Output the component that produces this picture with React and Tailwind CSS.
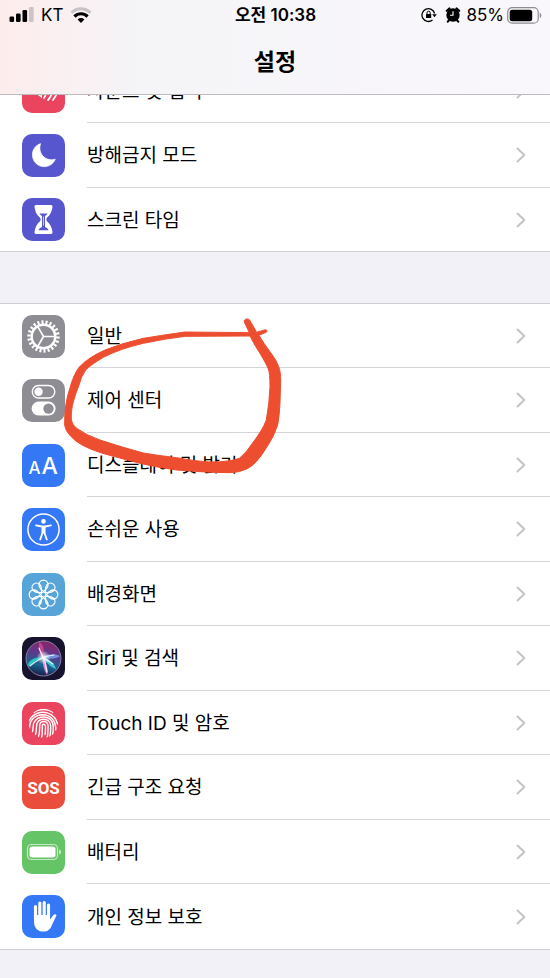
import React from "react";

const ROW_LABEL = "pt-0.5 text-[19px] leading-6 text-black";

function Tile({ className, children }) {
  return (
    <span className={`block h-[43px] w-[43px] shrink-0 overflow-hidden rounded-[10px] ${className}`}>
      <svg viewBox="0 0 43 43" className="block h-full w-full" fill="none" aria-hidden="true">
        {children}
      </svg>
    </span>
  );
}

function SoundIcon() {
  return (
    <Tile className="bg-[#eb445e]">
      <path d="M8 17h5l7-6v17l-7-5H8z" fill="#fff" />
      <path d="M23 16c2 3 2 8-1 12M28 13c3 5 3 12-2 17M33 11c3 6 3 13-2 19" stroke="#fff" strokeWidth="1.8" strokeLinecap="round" />
    </Tile>
  );
}

function MoonIcon() {
  return (
    <Tile className="bg-[#5856ce]">
      <path
        d="M18.6 9.6C13.4 11.4 10.4 15.8 10.4 20.8c0 6.7 5.2 11.9 11.9 11.9 5 0 9.1-2.8 11-7.6C24.8 28.2 15.2 20.5 18.6 9.6z"
        fill="#fff"
        stroke="#fff"
        strokeLinejoin="round"
        strokeWidth="0.6"
      />
    </Tile>
  );
}

function HourglassIcon() {
  return (
    <Tile className="bg-[#5856ce]">
      <path
        d="M14 7h15c1.300 0 1.700 1.200 1.400 2.400-.8 4.800-2.400 7.600-5 9.800-1.400 1.300-1.400 3.300 0 4.600 2.600 2.200 4.200 5 5 9.800.3 1.200-.1 2.400-1.400 2.400H14c-1.300 0-1.700-1.200-1.400-2.400.8-4.800 2.400-7.600 5-9.800 1.400-1.300 1.400-3.300 0-4.600-2.600-2.200-4.200-5-5-9.800C12.300 8.200 12.700 7 14 7z"
        fill="#fff"
      />
      <path d="M17.500 15.500h8c-.3 1.200-1.500 1.700-2.500 2.500v11c1.300.8 3 1.500 3.500 3.200h-10c.5-1.700 2.200-2.400 3.500-3.200V18c-1-.8-2.200-1.300-2.500-2.500z" fill="#5856ce" />
      <path d="M21.500 18.500v9" stroke="#fff" strokeWidth="0.700" />
    </Tile>
  );
}

function GearIcon() {
  return (
    <Tile className="bg-[#8e8d93]">
      <circle cx="21.500" cy="21.500" r="14.400" stroke="#fff" strokeWidth="3.600" pathLength="44" strokeDasharray="1 1" />
      <circle cx="21.500" cy="21.500" r="11.800" stroke="#fff" strokeWidth="2.400" />
      <path d="M21.500 21.500h11M21.500 21.500l-5.500-9.500M21.500 21.500l-5.500 9.500" stroke="#fff" strokeWidth="1.600" />
    </Tile>
  );
}

function ControlIcon() {
  return (
    <Tile className="bg-[#8e8d93]">
      <rect x="10.300" y="6.500" width="22.500" height="12.500" rx="6.250" stroke="#fff" strokeWidth="1.400" />
      <circle cx="16.600" cy="12.700" r="4.200" fill="#fff" />
      <rect x="9.600" y="22.600" width="24" height="14" rx="7" fill="#fff" />
      <circle cx="26.500" cy="29.600" r="5.200" fill="#8e8d93" />
    </Tile>
  );
}

function DisplayIcon() {
  return (
    <Tile className="bg-[#3478f6]">
      <text x="6.500" y="30" fill="#fff" fontFamily="Inter, sans-serif" fontSize="17" fontWeight="500">A</text>
      <text x="19.500" y="30" fill="#fff" fontFamily="Inter, sans-serif" fontSize="23" fontWeight="500">A</text>
    </Tile>
  );
}

function AccessibilityIcon() {
  return (
    <Tile className="bg-[#3478f6]">
      <circle cx="21.500" cy="21.500" r="15.600" stroke="#fff" strokeWidth="1.500" />
      <circle cx="21.500" cy="13.400" r="2.300" fill="#fff" />
      <path d="M14 17.300l5.800 1.200h3.400l5.800-1.200M20.600 19v5.500l-2.400 7M22.400 19v5.500l2.400 7" stroke="#fff" strokeWidth="1.800" strokeLinecap="round" strokeLinejoin="round" />
      <path d="M19.700 18h3.600v7.500h-3.600z" fill="#fff" />
    </Tile>
  );
}

function WallpaperIcon() {
  return (
    <Tile className="bg-[#57a5d8]">
      {[0, 45, 90, 135, 180, 225, 270, 315].map((angle) => (
        <path
          key={angle}
          d="M21.500 18.600C19 16.500 17 14 17 11.700a4.500 4.500 0 0 1 9 0c0 2.300-2 4.800-4.500 6.900z"
          stroke="#fff"
          strokeWidth="1.300"
          strokeLinejoin="round"
          transform={`rotate(${angle} 21.500 21.500)`}
        />
      ))}
      <circle cx="21.500" cy="21.500" r="2.300" stroke="#fff" strokeWidth="1" />
    </Tile>
  );
}

function SiriIcon() {
  return (
    <Tile className="bg-[#17132f]">
      <defs>
        <linearGradient id="siriOrb" x1="0.600" y1="0" x2="0.400" y2="1">
          <stop offset="0" stopColor="#8a2468" />
          <stop offset="0.400" stopColor="#5a3a8c" />
          <stop offset="0.700" stopColor="#176590" />
          <stop offset="1" stopColor="#1d1748" />
        </linearGradient>
        <radialGradient id="siriGlow">
          <stop offset="0" stopColor="#fff" />
          <stop offset="0.400" stopColor="#fff" stopOpacity="0.600" />
          <stop offset="1" stopColor="#fff" stopOpacity="0" />
        </radialGradient>
      </defs>
      <circle cx="21.500" cy="21.500" r="17.500" fill="url(#siriOrb)" stroke="#8b8aa8" strokeWidth="0.900" />
      <path d="M21 20C11 20 5 25 6 29c4-1 9-6 15-8z" fill="#2be0cf" opacity="0.800" />
      <path d="M21 20c2-8 0-13-4-15 0 6 0 11 4 15z" fill="#e0509a" opacity="0.700" />
      <path d="M21 20c4-3 12-4 17-1-4 3-11 4-17 1z" fill="#74a5f2" opacity="0.800" />
      <path d="M21 20c6 2 12 7 13 12-5-2-10-6-13-12z" fill="#48dfe8" opacity="0.800" />
      <path d="M21 20c3 6 6 13 4 18-3-5-5-12-4-18z" fill="#f08fd8" opacity="0.900" />
      <path d="M8 29c4-3 8-7 14-8l9 6M22 20l3 15M21 21l-4-10M21 20l11-2" stroke="#fff" strokeWidth="1.200" strokeLinecap="round" opacity="0.850" />
      <circle cx="21.500" cy="20.500" r="7" fill="url(#siriGlow)" />
    </Tile>
  );
}

function TouchIdIcon() {
  return (
    <Tile className="bg-[#eb445e]">
      <defs>
        <clipPath id="fingerClip">
          <ellipse cx="21.500" cy="21.200" rx="14.800" ry="14.500" />
        </clipPath>
      </defs>
      <g stroke="#fff" strokeWidth="1.400" strokeLinecap="round" clipPath="url(#fingerClip)">
        <path d="M12 10.500C17 6.500 26 6.500 31 10.500" />
        <path d="M7 19c2-4 5-6.500 9-8 6-2 13 0 16.500 4.500 1.500 2 2.500 4 3 6.500" />
        <path d="M7.500 26c0-7 4.500-13 13-13.300C29 12.700 34 19 33.800 28" />
        <path d="M10.500 29.500c1-3 0-6 1.500-9 2-4 5-5.500 9.500-5.500 6 0 9.800 4 9.800 10 0 3 0 5-.8 8" />
        <path d="M13.500 32.500c1.500-4 .5-8 1.500-11 1-3 3.500-4.300 6.500-4.300 4.500 0 7.200 3 7.200 7.500 0 4 0 7-1 10" />
        <path d="M16.500 34.500c1.500-4 1-8 1.200-11.500.3-2.300 1.800-3.500 3.800-3.500 3 0 4.600 2 4.600 5 0 4.500 0 8-1 11" />
        <path d="M19.500 36c1-4 .8-8 .8-12 0-2.500 3-2.500 3.200.5 0 3 .1 6-.5 8" />
      </g>
    </Tile>
  );
}

function SosIcon() {
  return (
    <Tile className="bg-[#eb4d3d]">
      <text x="21.500" y="27.500" textAnchor="middle" fill="#fff" fontFamily="Roboto, sans-serif" fontSize="17" fontWeight="700">SOS</text>
    </Tile>
  );
}

function BatteryIcon() {
  return (
    <Tile className="bg-[#65c466]">
      <rect x="5.500" y="13.500" width="30" height="15" rx="4" stroke="#c5eac5" strokeWidth="1.200" />
      <rect x="7.500" y="15.500" width="26" height="11" rx="2.500" fill="#fff" />
      <path d="M37.300 18.500c2.300.8 2.300 4.200 0 5z" fill="#d9f2d9" />
    </Tile>
  );
}

function HandIcon() {
  return (
    <Tile className="bg-[#3478f6]">
      <path d="M13.500 24V11.500M17.800 22V8M22.200 22V7.500M26.500 22V10" stroke="#fff" strokeWidth="3.100" strokeLinecap="round" />
      <path d="M12.050 20h15.900v4.500l3.300-4.300c1-1.200 2.800-1 3.300 0l-4.600 9.800C28.500 34.500 25.500 36.600 21.500 36.600c-6 0-9.450-4-9.450-9.600z" fill="#fff" />
    </Tile>
  );
}

function Chevron() {
  return (
    <svg viewBox="0 0 10 16" className="h-4 w-[10px] shrink-0" fill="none" aria-hidden="true">
      <path d="M1.500 1.500L8.300 8l-6.800 6.500" stroke="#c4c4c7" strokeWidth="2" strokeLinecap="round" strokeLinejoin="round" />
    </svg>
  );
}

function Row({ icon, label }) {
  return (
    <li className="group flex min-h-16 even:min-h-[65px] last:min-h-[63px]">
      <a href="#" className="flex grow items-center gap-[22px] pl-[22px]">
        {icon}
        <span className="flex grow items-center justify-between self-stretch border-b border-[#d5d5d8] pr-6 group-last:border-b-0">
          <span className={ROW_LABEL}>{label}</span>
          <Chevron />
        </span>
      </a>
    </li>
  );
}

const alerts = [
  { icon: <SoundIcon />, label: "사운드 및 햅틱" },
  { icon: <MoonIcon />, label: "방해금지 모드" },
  { icon: <HourglassIcon />, label: "스크린 타임" },
];

const general = [
  { icon: <GearIcon />, label: "일반" },
  { icon: <ControlIcon />, label: "제어 센터" },
  { icon: <DisplayIcon />, label: "디스플레이 및 밝기" },
  { icon: <AccessibilityIcon />, label: "손쉬운 사용" },
  { icon: <WallpaperIcon />, label: "배경화면" },
  { icon: <SiriIcon />, label: "Siri 및 검색" },
  { icon: <TouchIdIcon />, label: "Touch ID 및 암호" },
  { icon: <SosIcon />, label: "긴급 구조 요청" },
  { icon: <BatteryIcon />, label: "배터리" },
  { icon: <HandIcon />, label: "개인 정보 보호" },
];

function StatusBar() {
  return (
    <div className="grid h-[30px] grid-cols-[1fr_auto_1fr] items-center pl-[9px] pr-2 text-[17px] leading-5">
      <div className="flex items-center gap-[7px]">
        <svg viewBox="0 0 25 16" className="h-4 w-[25px]" aria-hidden="true">
          <rect x="0.500" y="9.500" width="4.600" height="5.500" rx="1.300" />
          <rect x="7" y="6.500" width="4.600" height="8.500" rx="1.300" />
          <rect x="13.500" y="3" width="4.600" height="12" rx="1.300" />
          <rect x="20" y="0" width="4.600" height="15" rx="1.300" fill="#cbc3c6" />
        </svg>
        <span>KT</span>
        <svg viewBox="0 0 22 16" className="h-4 w-[22px]" fill="none" aria-hidden="true">
          <path d="M1.500 5.800C7 .4 15 .4 20.500 5.800" stroke="#c8c1c5" strokeWidth="3" />
          <path d="M4.400 9.500c3.800-3.700 9.400-3.700 13.200 0" stroke="#000" strokeWidth="3.200" />
          <path d="M7.600 12.400c2-1.800 4.800-1.800 6.800 0L11 16z" fill="#000" />
        </svg>
      </div>
      <span className="font-semibold">오전 10:38</span>
      <div className="flex items-center justify-end">
        <svg viewBox="0 0 16 16" className="mr-2 h-4 w-4" fill="none" aria-hidden="true">
          <path d="M13.600 6.500A6.400 6.400 0 1 0 11.500 13" stroke="#000" strokeWidth="1.300" />
          <path d="M11.200 7.200h4.600l-2.300 3z" fill="#000" />
          <rect x="5" y="7" width="5.200" height="4" rx="0.600" fill="#000" />
          <path d="M6 7V5.800a1.600 1.600 0 0 1 3.200 0V7" stroke="#000" strokeWidth="1" />
        </svg>
        <svg viewBox="0 0 16 16" className="mr-[5px] h-4 w-4" fill="none" aria-hidden="true">
          <circle cx="8" cy="8" r="6.700" fill="#000" />
          <path d="M1.800 3.800l2.600-2.300M14.200 3.800l-2.600-2.300M2.800 14.600l1.700-2M13.200 14.600l-1.700-2" stroke="#000" strokeWidth="2.200" strokeLinecap="round" />
          <path d="M8 4.200v4.100H5" stroke="#fff" strokeWidth="1.100" />
        </svg>
        <span>85%</span>
        <svg viewBox="0 0 35 17" className="ml-[3px] h-[17px] w-[35px]" fill="none" aria-hidden="true">
          <rect x="0.700" y="0.700" width="30.500" height="15.500" rx="4.500" stroke="#8d8c90" strokeWidth="1.200" />
          <rect x="2.700" y="2.700" width="22.500" height="11.500" rx="2.500" fill="#000" />
          <path d="M32.800 5.800c2 .8 2 4.600 0 5.400z" fill="#8d8c90" />
        </svg>
      </div>
    </div>
  );
}

// hand-drawn marker ring around the control center row
function MarkerRing() {
  return (
    <svg viewBox="0 0 870 570" className="pointer-events-none absolute -top-[3px] left-[10px] h-[190px] w-[290px]" aria-hidden="true">
      <path
        fill="#ed4e2f"
        stroke="#ed4e2f"
        strokeWidth="3"
        strokeLinejoin="round"
        d="M703 66C701 56 715 53 720 62L740 97L766 89Q773 90 770 96L747 106Q762 132 782 158C806 190 812 210 812 240L810 310Q808 350 803 375Q792 410 770 442Q740 492 712 506Q690 517 660 518Q620 518 570 515L500 510Q440 502 390 490L310 469Q230 449 195 421Q166 396 164 375C163 335 168 300 178 270Q190 225 207 202Q235 172 285 150Q335 130 400 115Q460 105 525 96L718 98L703 66ZM720 108L525 109Q465 116 400 130Q330 146 280 172Q240 196 227 210Q213 230 207 255C196 285 182 320 184 355Q185 375 202 386Q228 405 270 420Q330 440 400 459Q470 470 500 473Q560 484 600 486Q660 486 688 475Q710 457 727 430Q758 390 769 360Q778 310 780 260Q780 220 775 207Q768 190 750 160Q735 138 720 108Z"
      />
    </svg>
  );
}

export default function App() {
  return (
    <div lang="ko" className="min-h-screen bg-[#f2f1f7] font-['Inter','Noto_Sans_CJK_KR',sans-serif] text-black">
      <header className="sticky top-0 z-10 border-b border-[#bdbbc0] bg-linear-to-r from-[#fdecec] via-[#f5f4f7] via-25% to-[#f9f7fb]">
        <StatusBar />
        <h1 className="flex h-16 items-center justify-center text-[23px] leading-8 font-semibold">설정</h1>
      </header>
      <main>
        <ul className="-mt-9 border-b border-[#cfced4] bg-white">
          {alerts.map((item) => (
            <Row key={item.label} {...item} />
          ))}
        </ul>
        <div className="relative mt-[51px]">
          <ul className="border-y border-[#cfced4] bg-white">
            {general.map((item) => (
              <Row key={item.label} {...item} />
            ))}
          </ul>
          <MarkerRing />
        </div>
      </main>
    </div>
  );
}
